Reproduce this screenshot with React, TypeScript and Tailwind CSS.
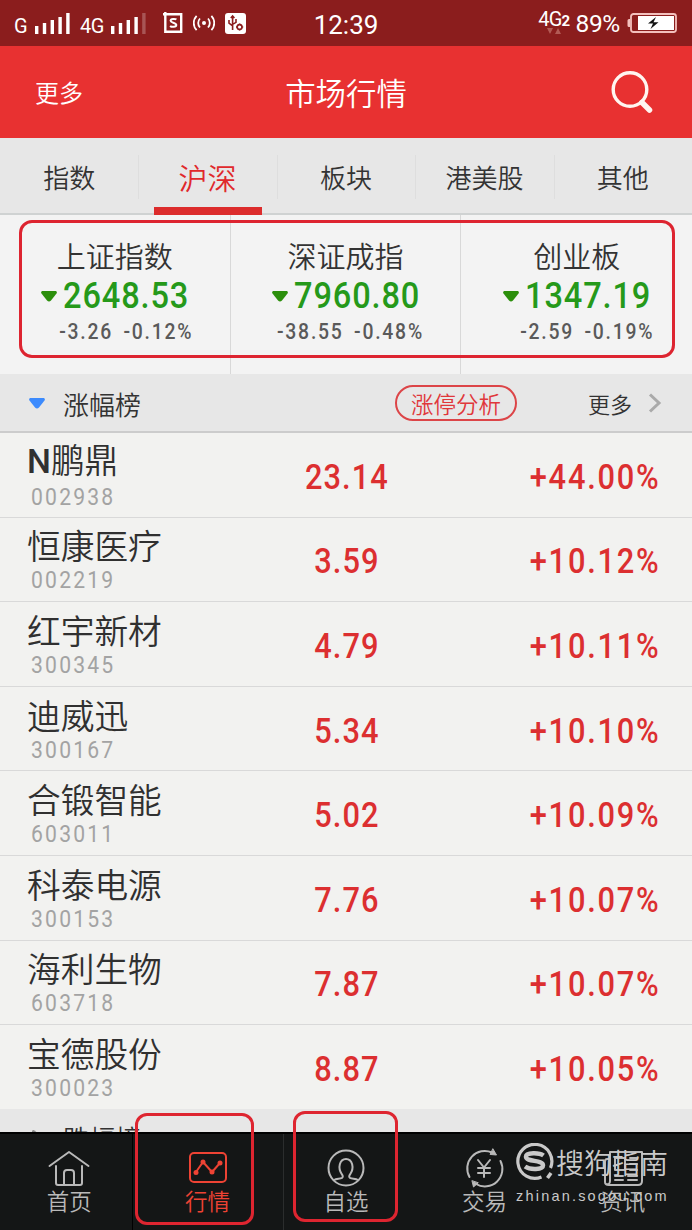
import type { ReactNode } from 'react';

type Stock = {
  name: string;
  code: string;
  price: string;
  change: string;
};

const tabs = ['指数', '沪深', '板块', '港美股', '其他'];

const indexes = [
  { name: '上证指数', value: '2648.53', diff: '-3.26', percent: '-0.12%', pad: 'pl-[22px]' },
  { name: '深证成指', value: '7960.80', diff: '-38.55', percent: '-0.48%', pad: 'pl-[10px]' },
  { name: '创业板', value: '1347.19', diff: '-2.59', percent: '-0.19%', pad: 'pl-[22px]' },
];

const stocks: Stock[] = [
  { name: 'N鹏鼎', code: '002938', price: '23.14', change: '+44.00%' },
  { name: '恒康医疗', code: '002219', price: '3.59', change: '+10.12%' },
  { name: '红宇新材', code: '300345', price: '4.79', change: '+10.11%' },
  { name: '迪威迅', code: '300167', price: '5.34', change: '+10.10%' },
  { name: '合锻智能', code: '603011', price: '5.02', change: '+10.09%' },
  { name: '科泰电源', code: '300153', price: '7.76', change: '+10.07%' },
  { name: '海利生物', code: '603718', price: '7.87', change: '+10.07%' },
  { name: '宝德股份', code: '300023', price: '8.87', change: '+10.05%' },
];

function Signal({ weak }: { weak?: boolean }) {
  return (
    <svg width="35" height="21" viewBox="0 0 35 21" fill="#fff">
      <rect x="0" y="13" width="3.4" height="8" />
      <rect x="7.8" y="10" width="3.4" height="11" />
      <rect x="15.6" y="7" width="3.4" height="14" />
      <rect x="23.4" y="4" width="3.4" height="17" />
      <rect x="31.2" y="0" width="3.4" height="21" opacity={weak ? 0.25 : 1} />
    </svg>
  );
}

function StatusBar() {
  return (
    <div className="relative flex h-[46px] items-center bg-[#8b1d1d] font-['Roboto',sans-serif] text-white">
      <span className="ml-[14px] mt-[6px] w-[21px] text-[20px] leading-none">G</span>
      <Signal />
      <span className="ml-[10px] mt-[6px] w-[31px] text-[20px] leading-none tracking-[-0.5px]">4G</span>
      <Signal weak />
      <svg className="ml-[17px]" width="20" height="22" viewBox="0 0 20 22" fill="none" stroke="#fff" strokeWidth="2.4">
        <path d="M0 2.3h18.2v17.4H2.3V0" />
        <path d="M13.4 7.6c-1-.9-5.8-1.2-5.8 1.2 0 2.2 5.7 1.6 5.7 4.2 0 2.4-4.8 2.2-6.2.9" strokeWidth="2" />
      </svg>
      <svg className="ml-[10px]" width="22" height="18" viewBox="0 0 22 18" fill="none" stroke="#fff" strokeWidth="1.8">
        <circle cx="11" cy="9" r="2" fill="#fff" stroke="none" />
        <path d="M7 4.5a6.5 6.5 0 0 0 0 9M15 4.5a6.5 6.5 0 0 1 0 9M3.6 1.8a10.5 10.5 0 0 0 0 14.4M18.4 1.8a10.5 10.5 0 0 1 0 14.4" />
      </svg>
      <svg className="ml-[10px]" width="21" height="21" viewBox="0 0 21 21">
        <rect width="21" height="21" rx="3" fill="#fff" />
        <g fill="none" stroke="#8b1d1d" strokeWidth="1.6">
          <path d="M7.6 17V3M5.8 5l1.8-2 1.8 2M4 7v3.2l3.6 2.6M11 6v3.4l-3.4 2" />
          <circle cx="14.6" cy="14" r="2.4" />
          <path d="M14.6 10.4v1M14.6 16.6v1M11 14h1M17.2 14h1" />
        </g>
      </svg>
      <span className="absolute left-0 w-full pt-[3px] text-center text-[26px] leading-none">12:39</span>
      <span className="relative ml-auto mb-[8px] text-[20px] leading-none tracking-[-0.8px]">
        4G<b className="text-[15px]">2</b>
        <svg className="absolute left-[9px] top-[19px]" width="14" height="6" viewBox="0 0 14 6" fill="#b25a55">
          <path d="M0 0h6L3 6zM8 6h6l-3-6z" />
        </svg>
      </span>
      <span className="ml-[6px] mt-[3px] text-[24.5px] leading-none tracking-[-0.3px]">89%</span>
      <svg className="ml-[7px] mr-[15px]" width="50" height="20" viewBox="0 0 50 20">
        <path d="M3 6H2a1.500 1.500 0 0 0-1.500 1.500v5A1.500 1.500 0 0 0 2 14h1z" fill="#f3c0bd" />
        <rect x="4" y="1" width="45" height="18" rx="2.500" fill="none" stroke="#f3c0bd" strokeWidth="1.800" />
        <rect x="11" y="3" width="36" height="14" fill="#fff" />
        <path d="M29 4l-8 6.500h5l-2.500 5.500 8-6.800h-5z" fill="#111" />
      </svg>
    </div>
  );
}

function TitleBar() {
  return (
    <header className="flex h-[92px] items-center justify-between bg-[#e83131] text-white">
      <span className="w-[100px] pl-[35px] text-[24px] leading-none font-[350] whitespace-nowrap">更多</span>
      <h1 className="text-[30.4px] leading-none font-[350]">市场行情</h1>
      <div className="flex w-[100px] justify-end pr-[37px]">
        <svg width="46" height="46" viewBox="0 0 46 46" fill="none" stroke="#fff5f0">
          <circle cx="21" cy="20.500" r="16.800" strokeWidth="3.400" />
          <path d="M33 33.500l7.500 7.500" strokeWidth="5.500" strokeLinecap="round" />
        </svg>
      </div>
    </header>
  );
}

function Tabs() {
  return (
    <nav className="grid h-[77px] grid-cols-5 border-b-2 border-[#cfd2d2] bg-[#e7e7e7] text-[#333]">
      {tabs.map((tab, i) => (
        <div key={tab} className="relative flex items-center justify-center pt-[3px]">
          {i > 0 && <i className="absolute left-0 h-[44px] w-px bg-[#dedede]" />}
          {i === 1 ? (
            <>
              <span className="text-[29px] leading-none font-[350] text-[#e0292c]">{tab}</span>
              <i className="absolute bottom-[-2px] h-[8px] w-[108px] bg-[#dc2c2c]" />
            </>
          ) : (
            <span className="text-[26px] leading-none font-[350]">{tab}</span>
          )}
        </div>
      ))}
    </nav>
  );
}

function IndexCards() {
  return (
    <section className="relative bg-[#f3f3f3]">
      <div className="grid h-[159px] grid-cols-3 divide-x divide-[#d8d8d8]">
        {indexes.map((item) => (
          <div key={item.name} className="flex flex-col items-center pt-[25px]">
            <div className="text-[29px] leading-[30px] font-[350] text-[#333]">{item.name}</div>
            <div className="mt-[7px] flex items-center font-['Roboto',sans-serif] text-[37px] leading-[38px] font-medium tracking-[1px] text-[#25991a]">
              <svg className="mr-[6px]" width="16" height="11" viewBox="0 0 16 11" fill="#2c8f0c">
                <path d="M1 0h14q1.500 1 .5 2.500L10 9.500q-2 2-4 0L.5 2.500Q-.5 1 1 0z" />
              </svg>
              <div className="w-[125px]">
                <span className="inline-block origin-left scale-x-[0.88]">{item.value}</span>
              </div>
            </div>
            <div className={`mt-[5px] font-['Roboto',sans-serif] text-[22px] leading-[24px] font-medium tracking-[2px] text-[#5a5a5a] ${item.pad}`}>
              <div className="flex scale-x-[0.88] gap-[12px]">
                <span>{item.diff}</span>
                <span>{item.percent}</span>
              </div>
            </div>
          </div>
        ))}
      </div>
      {/* highlight */}
      <div className="absolute left-[19px] top-[5px] h-[138px] w-[656px] rounded-[13px] border-3 border-[#dd2430]" />
    </section>
  );
}

function SectionHeader() {
  return (
    <div className="flex h-[59px] items-center border-b-2 border-[#cccccc] bg-[#e7e7e7] text-[#333]">
      <svg className="ml-[29px] mt-[2px]" width="16" height="11" viewBox="0 0 16 11" fill="#3d8bfd">
        <path d="M1 0h14q1.500 1 .5 2.500L10 9.500q-2 2-4 0L.5 2.500Q-.5 1 1 0z" />
      </svg>
      <span className="ml-[18px] mt-[2px] text-[26px] leading-none font-[350]">涨幅榜</span>
      <span className="ml-auto flex h-[36px] w-[122px] items-center justify-center rounded-full border-2 border-[#dc4548] pt-[2px] text-[22.5px] leading-none font-[350] text-[#e0373b]">
        涨停分析
      </span>
      <span className="ml-[71px] text-[22px] leading-none font-[350]">更多</span>
      <svg className="ml-[16px] mr-[30px]" width="14" height="20" viewBox="0 0 14 20" fill="none" stroke="#aaa" strokeWidth="3">
        <path d="M2 1.500l9 8.500-9 8.500" />
      </svg>
    </div>
  );
}

function StockRow({ stock }: { stock: Stock }) {
  return (
    <li className="grid h-[84.6px] grid-cols-3 items-center border-b border-[#d9d9d9] pr-[33px] pl-[27px]">
      <div>
        <div className="text-[33.7px] leading-[38px] font-[350] whitespace-nowrap text-[#303030]">
          {stock.name.startsWith('N') ? (
            <>
              <span className="font-['Roboto',sans-serif] font-medium">N</span>
              {stock.name.slice(1)}
            </>
          ) : (
            stock.name
          )}
        </div>
        <div className="mt-[4px] ml-[4px] origin-left scale-x-[0.88] font-['Roboto',sans-serif] text-[24px] leading-[24px] tracking-[2.5px] text-[#a3a3a3]">
          {stock.code}
        </div>
      </div>
      <div className="scale-x-[0.88] pt-[5px] pl-[8px] text-center font-['Roboto',sans-serif] text-[35px] leading-none font-medium tracking-[1.2px] text-[#dc2f30]">
        {stock.price}
      </div>
      <div className="origin-right scale-x-[0.88] pt-[5px] text-right font-['Roboto',sans-serif] text-[35px] leading-none font-medium tracking-[2px] text-[#dc2f30]">
        <span className="mr-[-2px]">{stock.change}</span>
      </div>
    </li>
  );
}

function NavItem({ label, active, children }: { label: string; active?: boolean; children: ReactNode }) {
  return (
    <div className={`flex flex-col items-center pt-[14px] ${active ? 'text-[#ee4334]' : 'text-[#b9b9b9]'}`}>
      <svg width="42" height="42" viewBox="0 0 42 42" fill="none" stroke="currentColor" strokeWidth="2" strokeLinecap="round" strokeLinejoin="round">
        {children}
      </svg>
      <span className="mt-[-2px] text-[22.5px] leading-[24px] font-[350]">{label}</span>
    </div>
  );
}

function BottomNav() {
  return (
    <nav className="relative grid h-[98px] grid-cols-5 border-t-2 border-black bg-[#141616]">
      <NavItem label="首页">
        <path d="M1.500 18L21 4l19.500 14M8 18v17q0 2 2 2h22q2 0 2-2V18M16 37V25q0-3 3-3h4q3 0 3 3v12" />
      </NavItem>
      <NavItem label="行情" active>
        <rect x="3" y="5" width="36" height="29" rx="4" />
        <path d="M9 24l7-10 9 10 8-9" />
        <g fill="currentColor" stroke="none">
          <circle cx="9" cy="24.500" r="2.500" />
          <circle cx="16" cy="14" r="2.500" />
          <circle cx="25" cy="24" r="2.500" />
          <circle cx="33" cy="15" r="2.500" />
        </g>
      </NavItem>
      <NavItem label="自选">
        <circle cx="21" cy="20" r="17.500" />
        <path d="M9 32c2.500-1.500 6-1 8-2.200 1.200-.8 1-2-.2-3.600C12.500 20 14.500 11 21 11s8.500 9 4.200 15.200c-1.200 1.600-1.400 2.800-.2 3.600 2 1.200 5.500.7 8 2.200" />
      </NavItem>
      <NavItem label="交易">
        <path d="M6.500 29A17.500 17.500 0 0 1 29 4.500M37.500 13A17.500 17.500 0 0 1 13 36" />
        <path d="M30 1l3.500 6-6-.5zM9 33l1.500 6 4.500-4z" fill="currentColor" strokeWidth="1" />
        <path d="M15 12l6 7.500 6-7.500M21 19.500V29M15 20h12M15 25h12" />
      </NavItem>
      <NavItem label="资讯">
        <path d="M8 11H5q-2 0-2 3v20q0 3 4 3h29q4 0 4-4V4H8v29q0 4-4 3" />
        <path d="M13 10h10v12H13zM28 10h7M28 16h7M28 22h7M13 28h8M26 28h9M13 32h8M26 32h9" />
      </NavItem>

      <i className="absolute left-[132px] h-full w-px bg-black" />
      <i className="absolute left-[283px] h-full w-px bg-[#2b2d2d]" />
      <div className="absolute left-[135px] top-[-21px] h-[112px] w-[119px] rounded-[12px] border-3 border-[#de2530]" />
      <div className="absolute left-[293px] top-[-23px] h-[111px] w-[105px] rounded-[12px] border-3 border-[#de2530]" />

      {/* watermark */}
      <div className="absolute left-[516px] top-[9px] text-[#c9c9c9]">
        <div className="flex items-center">
          <svg width="38" height="38" viewBox="0 0 38 38" fill="none" stroke="currentColor">
            <path d="M25.500 34A17 17 0 1 1 34.500 25" strokeWidth="3.200" />
            <path d="M27.500 12.500c-4-3-17.500-3.500-17.500 1.300 0 5.200 17 3 17 8.400 0 4.800-13 4.800-18 1.300" strokeWidth="4.500" />
            <path d="M31.500 35l3.500-5" strokeWidth="3.500" />
          </svg>
          <span className="ml-[2px] text-[28px] leading-none font-[350] whitespace-nowrap">搜狗指南</span>
        </div>
        <div className="mt-[7px] font-['Liberation_Sans',sans-serif] text-[14.5px] leading-[16px] font-medium tracking-[2.2px]">zhinan.sogou.com</div>
      </div>
    </nav>
  );
}

export default function App() {
  return (
    <main className="flex h-[1230px] w-[692px] flex-col overflow-hidden bg-[#f2f2f0] font-['Noto_Sans_CJK_SC',sans-serif]">
      <StatusBar />
      <TitleBar />
      <Tabs />
      <IndexCards />
      <SectionHeader />
      <ul className="h-[676px] shrink-0">
        {stocks.map((stock) => (
          <StockRow key={stock.code} stock={stock} />
        ))}
      </ul>
      {/* next list, mostly hidden under the nav bar */}
      <div className="flex h-[23px] shrink-0 items-start overflow-hidden bg-[#e7e7e7] pt-[16px]">
        <svg className="mt-[5px] ml-[32px]" width="11" height="16" viewBox="0 0 11 16" fill="#8a8a8a">
          <path d="M0 1q1-1.500 2.500-.5L9.500 6q2 2 0 4l-7 5.500Q1 16.500 0 15z" />
        </svg>
        <span className="ml-[20px] text-[26px] leading-none font-[350] text-[#333]">跌幅榜</span>
      </div>
      <BottomNav />
    </main>
  );
}
